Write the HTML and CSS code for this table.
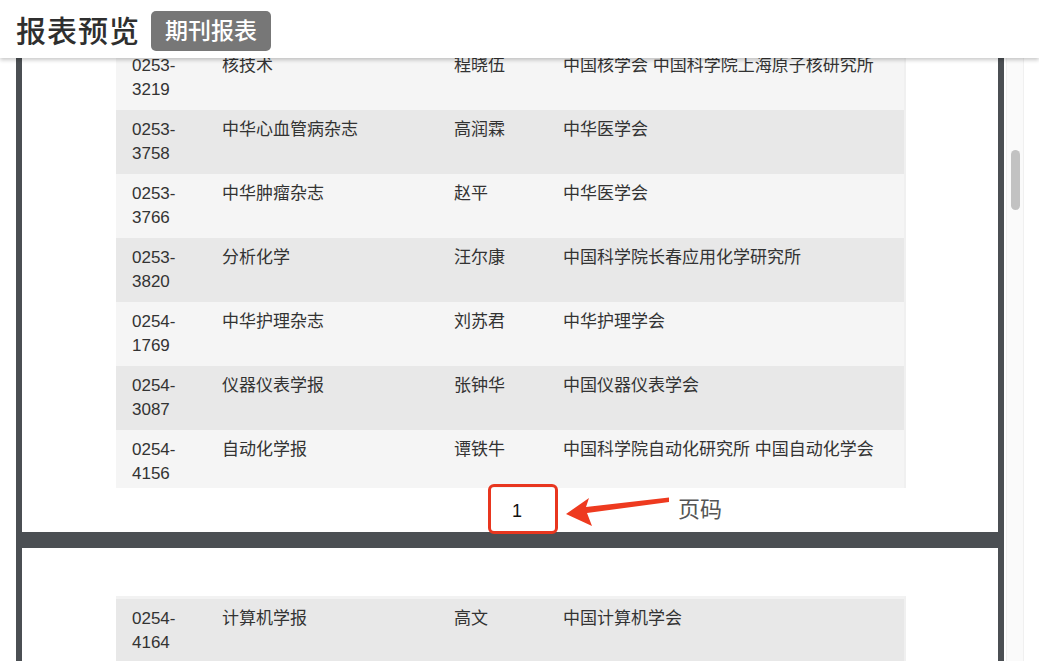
FILE: index.html
```html
<!DOCTYPE html>
<html lang="zh-CN">
<head>
  <meta charset="UTF-8" />
  <meta name="viewport" content="width=device-width, initial-scale=1.0" />
  <title>报表预览</title>
  <link rel="stylesheet" href="styles.css">
</head>
<body>
  <header>
    <h1 class="page-title">报表预览</h1>
    <span class="badge">期刊报表</span>
  </header>
  <main class="viewer">
    <div class="pages">
      <div class="pages-inner">
        <section class="report-page first">
          <div class="report">
            <div class="row"><span>0253-3219</span><span>核技术</span><span>程晓伍</span><span>中国核学会 中国科学院上海原子核研究所</span></div>
            <div class="row"><span>0253-3758</span><span>中华心血管病杂志</span><span>高润霖</span><span>中华医学会</span></div>
            <div class="row"><span>0253-3766</span><span>中华肿瘤杂志</span><span>赵平</span><span>中华医学会</span></div>
            <div class="row"><span>0253-3820</span><span>分析化学</span><span>汪尔康</span><span>中国科学院长春应用化学研究所</span></div>
            <div class="row"><span>0254-1769</span><span>中华护理杂志</span><span>刘苏君</span><span>中华护理学会</span></div>
            <div class="row"><span>0254-3087</span><span>仪器仪表学报</span><span>张钟华</span><span>中国仪器仪表学会</span></div>
            <div class="row"><span>0254-4156</span><span>自动化学报</span><span>谭铁牛</span><span>中国科学院自动化研究所 中国自动化学会</span></div>
          </div>
          <footer class="page-foot">
            <span class="page-no">1</span>
            <span class="mark-box"></span>
            <svg class="mark-arrow" width="106" height="36" viewBox="0 0 106 36">
              <path d="M1 22 L24 6 L21 15 L104 5.5 L104 10 L22 21 L27 34 Z" fill="#ee3a1f"/>
            </svg>
            <span class="mark-label">页码</span>
          </footer>
        </section>
        <section class="report-page">
          <div class="report">
            <div class="row even"><span>0254-4164</span><span>计算机学报</span><span>高文</span><span>中国计算机学会</span></div>
          </div>
        </section>
      </div>
    </div>
    <div class="scrollbar"><div class="thumb"></div></div>
  </main>
</body>
</html>
```

FILE: styles.css
```css
body {
  margin: 0;
  font-family: "Liberation Sans", "Noto Sans CJK SC", sans-serif;
  color: #333;
  background: #fff;
  height: 100vh;
  overflow: hidden;
}
header {
  position: relative;
  z-index: 2;
  height: 58px;
  display: flex;
  align-items: center;
  gap: 11px;
  padding: 0 16px;
  background: #fff;
  box-shadow: 0 2px 4px rgba(0, 0, 0, 0.22);
}
.page-title {
  margin: 0;
  font-size: 30px;
  font-weight: 500;
  color: #2f2f2f;
  letter-spacing: 1px;
}
.badge {
  background: #777;
  color: #fff;
  font-size: 23px;
  font-weight: 500;
  line-height: 40px;
  padding: 0 14px;
  border-radius: 5px;
  margin-top: 4px;
}
.viewer {
  display: flex;
  height: 603px;
  padding-left: 16px;
}
.pages {
  width: 976px;
  padding: 0 6px;
  background: #4b4f53;
  overflow: hidden;
}
.pages-inner {
  margin-top: -12px;
  display: flex;
  flex-direction: column;
  gap: 16px;
}
.report-page {
  position: relative;
  background: #fff;
  padding: 48px 92px 0 94px;
}
.report-page.first {
  padding-top: 0;
}
.report {
  width: 788px;
  border-top: 3px solid #f2f2f2;
  border-right: 2px solid #f0f0f0;
  font-size: 17px;
  line-height: 24px;
  color: #333;
}
.first .report {
  border-top: 0;
  height: 442px;
  overflow: hidden;
}
.row {
  display: grid;
  grid-template-columns: 90px 232px 109px 357px;
  height: 64px;
  box-sizing: border-box;
  padding: 8px 0;
}
.row span {
  padding-left: 16px;
  padding-right: 16px;
}
.row:nth-child(odd) { background: #f5f5f5; }
.row:nth-child(even),
.row.even { background: #e8e8e8; }
.page-foot {
  position: relative;
  height: 44px;
  display: flex;
  justify-content: center;
  align-items: center;
}
.page-no {
  font-size: 18px;
  color: #111;
  padding-left: 12px;
  margin-top: 3px;
}
.mark-box {
  position: absolute;
  left: 372px;
  top: -4px;
  width: 64px;
  height: 44px;
  border: 3px solid #e8361f;
  border-radius: 6px;
}
.mark-arrow {
  position: absolute;
  left: 449px;
  top: 4px;
}
.mark-label {
  position: absolute;
  left: 562px;
  top: 3px;
  font-size: 22px;
  color: #555;
}
.scrollbar {
  width: 16px;
  margin-left: 2px;
  background: #fafafa;
  border-left: 1px solid #f0f0f0;
  border-right: 1px solid #f0f0f0;
  padding-top: 92px;
}
.thumb {
  width: 9px;
  height: 60px;
  margin-left: 4px;
  background: #c2c2c2;
  border-radius: 5px;
}
```
